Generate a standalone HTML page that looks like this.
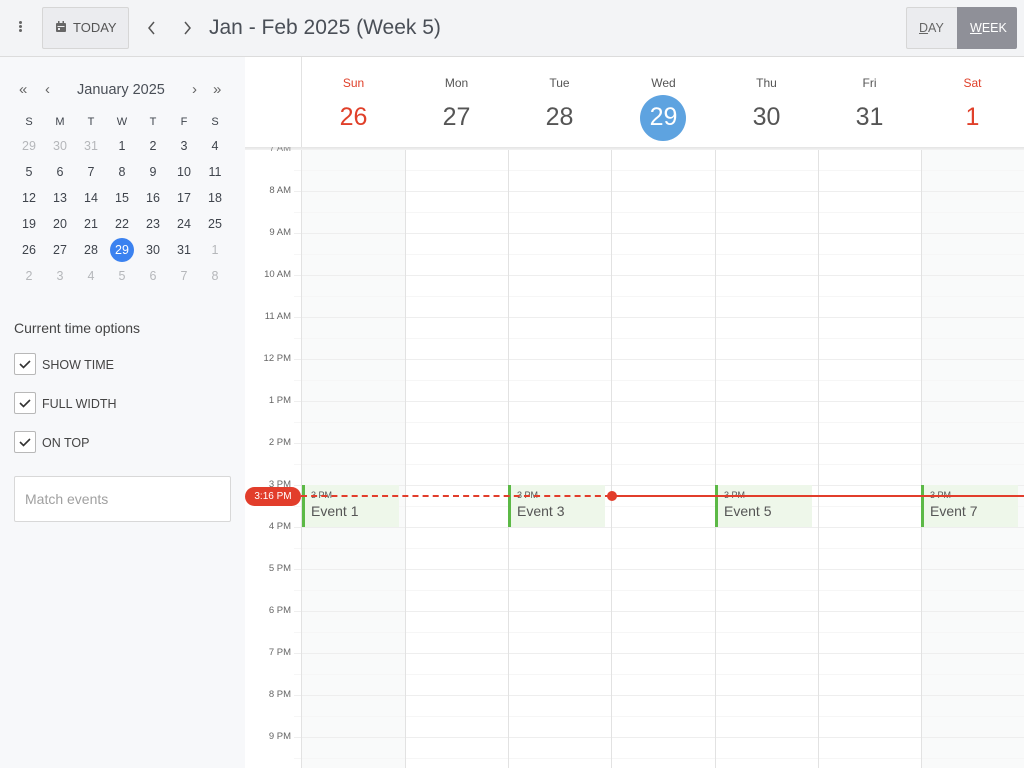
<!DOCTYPE html>
<html><head><meta charset="utf-8"><style>
*{box-sizing:border-box;margin:0;padding:0}
body{width:1024px;height:768px;overflow:hidden;font-family:"Liberation Sans",sans-serif;background:#fff;position:relative;color:#4a4f57}
.a{position:absolute}
#top{left:0;top:0;width:1024px;height:57px;background:#f3f4f6;border-bottom:1px solid #dcdcdc}
#side{left:0;top:57px;width:245px;height:711px;background:#f7f8fa}
.btn{border:1px solid #d6d6d6;background:#ebecef;border-radius:2px}
.mc{position:absolute;width:24px;height:24px;line-height:24px;text-align:center;font-size:12.5px;color:#3f444c}
.g{color:#b5b7ba}
.cb{position:absolute;left:14px;width:22px;height:22px;border:1px solid #b8b8b8;border-radius:2px;background:#fff}
.cl{position:absolute;left:42px;font-size:12.5px;color:#444}
.tl{position:absolute;right:733px;font-size:9.5px;color:#666;text-align:right;width:50px}
.vl{position:absolute;top:149px;width:1px;height:619px;background:#e2e2e2}
.dh{position:absolute;top:76px;width:103px;text-align:center}
.dn{font-size:12px;color:#555}
.dd{font-size:25px;color:#555;margin-top:13px}
.ev{position:absolute;top:485px;height:42px;width:97px;background:#eef7ea;border-left:3px solid #5cb946}
.ev .t{font-size:9px;color:#555;position:absolute;left:6px;top:5px}
.ev .n{font-size:14px;color:#555;position:absolute;left:6px;top:18px}
</style></head><body>
<div id="top" class="a"></div>
<div class="a" style="left:19px;top:21px;width:3px;height:3px;background:#666;border-radius:50%;box-shadow:0 4px 0 #666,0 8px 0 #666"></div>
<div class="a btn" style="left:42px;top:7px;width:87px;height:42px"></div>
<svg class="a" style="left:55px;top:21px" width="12" height="12" viewBox="0 0 12 12"><rect x="1" y="2" width="10" height="9" rx="1" fill="#666"/><rect x="3" y="0" width="1.5" height="3" fill="#666"/><rect x="7.5" y="0" width="1.5" height="3" fill="#666"/><rect x="2.5" y="5" width="7" height="1" fill="#ebecef"/><rect x="3" y="7" width="2" height="2" fill="#ebecef"/></svg>
<div class="a" style="left:73px;top:20px;font-size:13px;color:#555">TODAY</div>
<svg class="a" style="left:145px;top:20px" width="14" height="16"><path d="M9 2L4 8l5 6" stroke="#555" stroke-width="1.5" fill="none"/></svg>
<svg class="a" style="left:180px;top:20px" width="14" height="16"><path d="M5 2l5 6-5 6" stroke="#555" stroke-width="1.5" fill="none"/></svg>
<div class="a" style="left:209px;top:16px;font-size:21px;color:#4a4f57">Jan - Feb 2025 (Week 5)</div>
<div class="a btn" style="left:906px;top:7px;width:52px;height:42px;border-right:none"></div>
<div class="a" style="left:957px;top:7px;width:60px;height:42px;background:#8f9098;border-radius:0 2px 2px 0"></div>
<div class="a" style="left:919px;top:21px;font-size:12.5px;color:#666"><u>D</u>AY</div>
<div class="a" style="left:970px;top:21px;font-size:12.5px;color:#fff"><u>W</u>EEK</div>

<div id="side" class="a"></div>
<div class="a" style="left:19px;top:81px;font-size:15px;color:#666">«</div>
<div class="a" style="left:45px;top:81px;font-size:15px;color:#666">‹</div>
<div class="a" style="left:77px;top:82px;font-size:14.5px;color:#4a4f57">January 2025</div>
<div class="a" style="left:192px;top:81px;font-size:15px;color:#666">›</div>
<div class="a" style="left:213px;top:81px;font-size:15px;color:#666">»</div>
<div id="mini"></div>
<div class="a" style="left:14px;top:320px;font-size:14px;color:#444">Current time options</div>
<div class="cb" style="top:353px"></div><div class="cl" style="top:358px">SHOW TIME</div>
<div class="cb" style="top:392px"></div><div class="cl" style="top:397px">FULL WIDTH</div>
<div class="cb" style="top:431px"></div><div class="cl" style="top:436px">ON TOP</div>
<svg class="a" style="left:14px;top:353px" width="22" height="110"><g stroke="#333" stroke-width="1.6" fill="none"><path d="M6 11l3.5 3.5L16 8"/><path d="M6 50l3.5 3.5L16 47"/><path d="M6 89l3.5 3.5L16 86"/></g></svg>
<div class="a" style="left:14px;top:476px;width:217px;height:46px;background:#fff;border:1px solid #d8d8d8;border-radius:2px"></div>
<div class="a" style="left:25px;top:491px;font-size:14px;color:#a0a0a0">Match events</div>

<div class="a" style="left:301px;top:149px;width:104px;height:619px;background:#f9fafa"></div>
<div class="a" style="left:922px;top:149px;width:102px;height:619px;background:#f9fafa"></div>
<div class="a" style="left:294px;top:149px;width:730px;height:619px;background:repeating-linear-gradient(to bottom,#eeeeee 0,#eeeeee 1px,transparent 1px,transparent 21px,#f6f6f6 21px,#f6f6f6 22px,transparent 22px,transparent 42px)"></div>
<div class="vl" style="left:301px;top:57px;height:711px"></div>
<div class="vl" style="left:405px"></div><div class="vl" style="left:508px"></div><div class="vl" style="left:611px"></div><div class="vl" style="left:715px"></div><div class="vl" style="left:818px"></div><div class="vl" style="left:921px"></div>
<div class="a" style="left:245px;top:147px;width:779px;height:3px;background:linear-gradient(#e4e4e4,#f2f2f2)"></div>
<div class="a" style="left:255px;top:143px;width:36px;font-size:9.5px;color:#888;text-align:right;clip-path:inset(4px 0 0 0)">7 AM</div>
<div id="tl"></div>
<div class="dh" style="left:302px"><div class="dn" style="color:#e0402a">Sun</div><div class="dd" style="color:#e0402a">26</div></div>
<div class="dh" style="left:405px"><div class="dn">Mon</div><div class="dd">27</div></div>
<div class="dh" style="left:508px"><div class="dn">Tue</div><div class="dd">28</div></div>
<div class="a" style="left:640px;top:95px;width:46px;height:46px;border-radius:50%;background:#5ea3e0"></div>
<div class="dh" style="left:612px"><div class="dn">Wed</div><div class="dd" style="color:#fff">29</div></div>
<div class="dh" style="left:715px"><div class="dn">Thu</div><div class="dd">30</div></div>
<div class="dh" style="left:818px"><div class="dn">Fri</div><div class="dd">31</div></div>
<div class="dh" style="left:921px"><div class="dn" style="color:#e0402a">Sat</div><div class="dd" style="color:#e0402a">1</div></div>

<div class="ev" style="left:302px"><div class="t">3 PM</div><div class="n">Event 1</div></div>
<div class="ev" style="left:508px"><div class="t">3 PM</div><div class="n">Event 3</div></div>
<div class="ev" style="left:715px"><div class="t">3 PM</div><div class="n">Event 5</div></div>
<div class="ev" style="left:921px"><div class="t">3 PM</div><div class="n">Event 7</div></div>
<div class="a" style="left:301px;top:495px;width:310px;height:0;border-top:2px dashed #e23d2b"></div>
<div class="a" style="left:611px;top:495px;width:413px;height:2px;background:#e23d2b"></div>
<div class="a" style="left:607px;top:491px;width:10px;height:10px;border-radius:50%;background:#e23d2b"></div>
<div class="a" style="left:245px;top:487px;width:56px;height:19px;border-radius:10px;background:#e23d2b;color:#fff;font-size:10px;text-align:center;line-height:19px">3:16 PM</div>
<script>
var m=document.getElementById('mini'),h='';var xs=[29,60,91,122,153,184,215],ys=[121,146,172,198,224,250,276];
var hd=['S','M','T','W','T','F','S'];hd.forEach(function(d,i){h+='<div class="mc" style="left:'+(xs[i]-12)+'px;top:'+(ys[0]-11)+'px;font-size:11px">'+d+'</div>'});
var ds=[29,30,31];for(var i=1;i<=31;i++)ds.push(i);for(i=1;i<=8;i++)ds.push(i);
ds.forEach(function(d,k){var r=Math.floor(k/7)+1,c=k%7;var g=(k<3||k>33)?' g':'';var st='';if(k==31)st='background:#3b82f0;color:#fff;border-radius:50%;';h+='<div class="mc'+g+'" style="'+st+'left:'+(xs[c]-12)+'px;top:'+(ys[r]-12)+'px">'+d+'</div>'});
m.innerHTML=h;
var t=document.getElementById('tl'),s='';var L=['7 AM','8 AM','9 AM','10 AM','11 AM','12 PM','1 PM','2 PM','3 PM','4 PM','5 PM','6 PM','7 PM','8 PM','9 PM'];
L.forEach(function(l,i){var y=149+i*42-6;if(i==0)return;s+='<div class="tl" style="top:'+y+'px">'+l+'</div>'});t.innerHTML=s;
</script>
</body></html>
